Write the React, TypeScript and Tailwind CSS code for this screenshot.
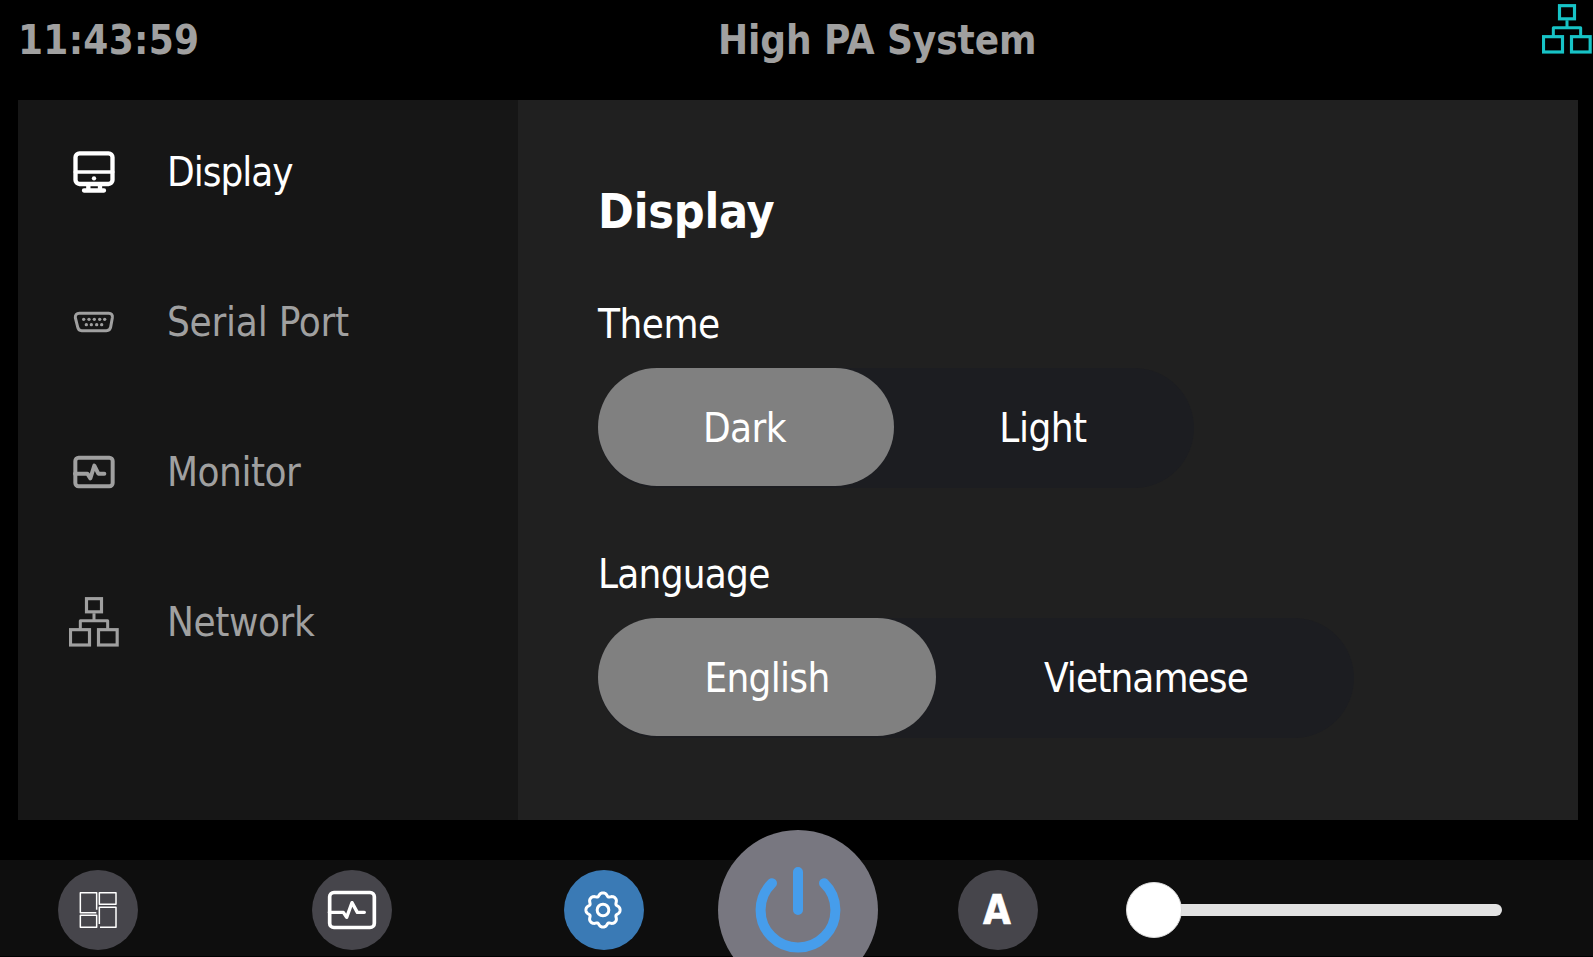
import React, { useState } from "react";

type IconProps = { className?: string };

function NetworkIcon({ className }: IconProps) {
  return (
    <svg viewBox="57 80 150 150" className={className} fill="none" stroke="currentColor" strokeWidth="9.500">
      <rect x="109.500" y="85" width="45" height="39.500" />
      <rect x="61.500" y="178" width="57" height="46" />
      <rect x="145.500" y="178" width="56" height="46" />
      <path d="M132 129V151M91 176V151H173V176" strokeLinejoin="round" strokeWidth="9" />
    </svg>
  );
}

function DisplayIcon({ className }: IconProps) {
  return (
    <svg viewBox="219 453 126 126" className={className} fill="none" stroke="currentColor" strokeWidth="13" strokeLinecap="round">
      <rect x="226.500" y="460" width="111" height="92" rx="12" />
      <path d="M226 516H338" strokeWidth="11" />
      <path d="M265 553V568M300 553V568M252 571.500H312" />
      <circle cx="282" cy="535" r="6.500" fill="currentColor" stroke="none" />
    </svg>
  );
}

function SerialIcon({ className }: IconProps) {
  return (
    <svg viewBox="69 63 126 126" className={className} fill="none" stroke="currentColor" strokeWidth="9">
      <path d="M88 100H176Q189 100 187 113L182 141Q180 152 169 152H95Q85 152 83 141L76 113Q75 100 88 100Z" />
      <g fill="currentColor" stroke="none">
        {[101, 117, 133, 149, 164].map((x) => (
          <circle key={x} cx={x} cy="118" r="5" />
        ))}
        {[109, 124, 140, 155].map((x) => (
          <circle key={x} cx={x} cy="134" r="5" />
        ))}
      </g>
    </svg>
  );
}

function MonitorIcon({ className }: IconProps) {
  return (
    <svg viewBox="69 513 126 126" className={className} fill="none" stroke="currentColor" strokeWidth="12" strokeLinecap="round" strokeLinejoin="round">
      <rect x="76" y="533" width="112" height="86" rx="10" />
      <path d="M75 581H112L121 595L133 557L145 581H163" />
    </svg>
  );
}

function PulseIcon({ className }: IconProps) {
  return (
    <svg viewBox="981 225 150 150" className={className} fill="none" stroke="currentColor" strokeWidth="11" strokeLinecap="round" strokeLinejoin="round">
      <rect x="989" y="247.500" width="134" height="105" rx="13" />
      <path d="M988 307H1030L1040 322L1056 278L1072 307H1093" strokeWidth="10" />
    </svg>
  );
}

function TilesIcon({ className }: IconProps) {
  return (
    <svg viewBox="237 243 114 114" className={className} fill="none" stroke="currentColor" strokeWidth="4.500" strokeLinejoin="round">
      <path d="M290 299V248H241V308H289" />
      <rect x="298" y="248" width="50" height="35" />
      <rect x="241" y="316" width="49" height="36" />
      <path d="M298 342V292H348V352H300" />
    </svg>
  );
}

const gearPoints = Array.from({ length: 160 }, (_, i) => {
  const a = (i / 160) * Math.PI * 2;
  const r = 47.5 + 4.5 * Math.cos(8 * a) - 0.8 * Math.cos(16 * a);
  return `${(60 + r * Math.cos(a)).toFixed(2)},${(60 + r * Math.sin(a)).toFixed(2)}`;
}).join(" ");

function GearIcon({ className }: IconProps) {
  return (
    <svg viewBox="0 0 120 120" className={className} fill="none" stroke="currentColor" strokeWidth="9" strokeLinejoin="round">
      <polygon points={gearPoints} />
      <circle cx="60" cy="60" r="17.500" />
    </svg>
  );
}

function PowerIcon({ className }: IconProps) {
  return (
    <svg viewBox="0 0 100 100" className={className} fill="none" stroke="currentColor" strokeWidth="10" strokeLinecap="round">
      <path d="M50 12V50M24 23.200A37.400 37.400 0 1 0 76 23.200" />
    </svg>
  );
}

const navItems = [
  { id: "display", label: "Display", Icon: DisplayIcon, box: "size-[42px]", spacing: "tracking-[-1px]" },
  { id: "serial", label: "Serial Port", Icon: SerialIcon, box: "size-[42px]", spacing: "tracking-[-0.23px]" },
  { id: "monitor", label: "Monitor", Icon: MonitorIcon, box: "size-[42px]", spacing: "tracking-[-0.5px]" },
  { id: "network", label: "Network", Icon: NetworkIcon, box: "size-[50px]", spacing: "tracking-[-0.4px]" },
];

type Option = { label: string; width: string; spacing: string };

function Segmented({ options }: { options: Option[] }) {
  const [active, setActive] = useState(0);
  return (
    <div className="mt-6 flex h-[120px] w-fit rounded-full bg-[#1c1d21]">
      {options.map((o, i) => (
        <button
          key={o.label}
          onClick={() => setActive(i)}
          className={`h-[118px] rounded-full pt-0.5 ${o.width} ${o.spacing} ${i === active ? "bg-[#808080]" : ""}`}
        >
          {o.label}
        </button>
      ))}
    </div>
  );
}

const round = "flex size-20 shrink-0 items-center justify-center rounded-full";

export default function App() {
  const [page, setPage] = useState("display");
  return (
    <div className="flex h-[957px] w-[1593px] flex-col overflow-hidden bg-black font-['DejaVu_Sans_Condensed','DejaVu_Sans',sans-serif] text-[40px] leading-10 text-white">
      <header className="flex h-[100px] shrink-0 items-start pr-px pl-[18px] font-bold text-[#a0a0a0]">
        <div className="w-[700px] pt-5 tracking-[0.3px]">11:43:59</div>
        <h1 className="flex-1 pt-5 tracking-[-0.06px]">High PA System</h1>
        <NetworkIcon className="mt-1 size-[50px] text-[#17c3c6]" />
      </header>

      <main className="mr-[15px] ml-[18px] flex h-[720px] shrink-0">
        <nav className="flex w-[500px] flex-col gap-[60px] bg-[#161616] pt-[27px] pl-[51px]">
          {navItems.map(({ id, label, Icon, box, spacing }) => (
            <button
              key={id}
              onClick={() => setPage(id)}
              className={`flex h-[90px] items-center text-left ${id === page ? "text-white" : "text-[#a0a0a0]"}`}
            >
              <span className="flex w-[50px] justify-center">
                <Icon className={box} />
              </span>
              <span className={`ml-12 ${spacing}`}>{label}</span>
            </button>
          ))}
        </nav>
        <section className="flex-1 bg-[#202020] pt-[81px] pl-20">
          <h2 className="text-5xl leading-[60px] font-bold tracking-[-0.2px]">Display</h2>
          <h3 className="mt-[63px] tracking-[-0.5px]">Theme</h3>
          <Segmented
            options={[
              { label: "Dark", width: "w-[296px] pr-[3px]", spacing: "tracking-[-0.6px]" },
              { label: "Light", width: "w-[300px] pr-0.5", spacing: "tracking-[-0.5px]" },
            ]}
          />
          <h3 className="mt-[66px] tracking-[-0.75px]">Language</h3>
          <Segmented
            options={[
              { label: "English", width: "w-[338px]", spacing: "tracking-[-0.7px]" },
              { label: "Vietnamese", width: "w-[418px] pl-0.5", spacing: "tracking-[-0.9px]" },
            ]}
          />
        </section>
      </main>

      <footer className="mt-10 flex h-24 shrink-0 items-center bg-[#0e0e0e] pt-1 pl-[58px]">
        <button className={`${round} bg-[#46454b]`}>
          <TilesIcon className="size-[38px]" />
        </button>
        <button className={`${round} ml-[174px] bg-[#46454b]`}>
          <PulseIcon className="size-[50px]" />
        </button>
        <button className={`${round} ml-[172px] bg-[#3a7ab5] pr-0.5`}>
          <GearIcon className="size-10" />
        </button>
        <button className="ml-[74px] flex size-40 shrink-0 items-center justify-center rounded-full bg-[#787780] text-[#469deb]">
          <PowerIcon className="size-[100px]" />
        </button>
        <button className={`${round} ml-20 bg-[#46454b] pr-0.5 font-bold [-webkit-text-stroke:0.6px_white]`}>A</button>
        <div className="ml-[88px] flex w-[376px] items-center">
          <div className="z-10 size-14 shrink-0 rounded-full border border-[#dcdcdc] bg-white" />
          <div className="-ml-7 h-3 flex-1 rounded-full bg-[#e2e2e2]" />
        </div>
      </footer>
    </div>
  );
}
